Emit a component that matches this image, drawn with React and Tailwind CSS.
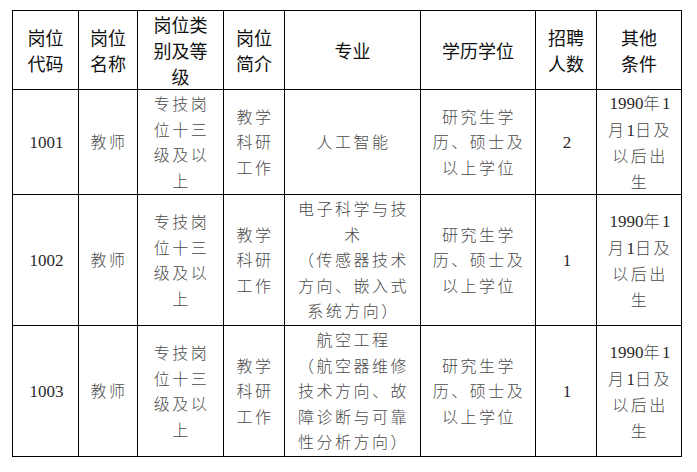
const HEAD = ["岗位\n代码", "岗位\n名称", "岗位类\n别及等\n级", "岗位\n简介", "专业", "学历学位", "招聘\n人数", "其他\n条件"];

const ROWS = [
  {
    h: "h-[105px]",
    cells: [
      "1001",
      "教师",
      "专技岗\n位十三\n级及以\n上",
      "教学\n科研\n工作",
      "人工智能",
      "研究生学\n历、硕士及\n以上学位",
      "2",
      "1990年1\n月1日及\n以后出\n生",
    ],
  },
  {
    h: "h-[131px]",
    cells: [
      "1002",
      "教师",
      "专技岗\n位十三\n级及以\n上",
      "教学\n科研\n工作",
      "电子科学与技\n术\n（传感器技术\n方向、嵌入式\n系统方向）",
      "研究生学\n历、硕士及\n以上学位",
      "1",
      "1990年1\n月1日及\n以后出\n生",
    ],
  },
  {
    h: "h-[131px]",
    cells: [
      "1003",
      "教师",
      "专技岗\n位十三\n级及以\n上",
      "教学\n科研\n工作",
      "航空工程\n（航空器维修\n技术方向、故\n障诊断与可靠\n性分析方向）",
      "研究生学\n历、硕士及\n以上学位",
      "1",
      "1990年1\n月1日及\n以后出\n生",
    ],
  },
];

const WIDTHS = ["w-[66px]", "w-[59px]", "w-[86px]", "w-[61px]", "w-[136px]", "w-[115px]", "w-[61px]", "w-[85px]"];

// digits in the body run tight and slightly darker, the CJK text is spaced out
function Line({ line }) {
  const parts = line.split(/(\d+)/).filter(Boolean);
  return (
    <div className="whitespace-nowrap">
      {parts.map((p, i) =>
        /^\d+$/.test(p) ? (
          <span key={i} className="font-['Liberation_Serif',serif] text-[17px] tracking-normal text-[#2a2a2a]">
            {p}
          </span>
        ) : (
          <span key={i}>{p}</span>
        )
      )}
    </div>
  );
}

function Lines({ text }) {
  return text.split("\n").map((line, i) => <Line key={i} line={line} />);
}

export default function App() {
  return (
    <div className="min-h-[472px] w-[697px] bg-white pl-[12px] pt-[10px]">
      <table className="table-fixed border-collapse border border-black">
        <colgroup>
          {WIDTHS.map((w, i) => (
            <col key={i} className={w} />
          ))}
        </colgroup>
        <thead>
          <tr className="h-[79px]">
            {HEAD.map((t, i) => (
              <th
                key={i}
                className="border border-black p-0 text-center align-middle font-['Noto_Sans_CJK_SC',sans-serif] text-[18px] leading-[26px] font-normal text-[#111]"
              >
                {t.split("\n").map((l, j) => (
                  <div key={j} className="whitespace-nowrap">
                    {l}
                  </div>
                ))}
              </th>
            ))}
          </tr>
        </thead>
        <tbody>
          {ROWS.map((row, r) => (
            <tr key={r} className={row.h}>
              {row.cells.map((c, i) => (
                <td
                  key={i}
                  className="border border-black p-0 pl-[2px] text-center align-middle font-['Noto_Sans_CJK_SC',sans-serif] text-[16px] leading-[25.5px] font-light tracking-[2.5px] text-[#4a4a4a]"
                >
                  <Lines text={c} />
                </td>
              ))}
            </tr>
          ))}
        </tbody>
      </table>
    </div>
  );
}
